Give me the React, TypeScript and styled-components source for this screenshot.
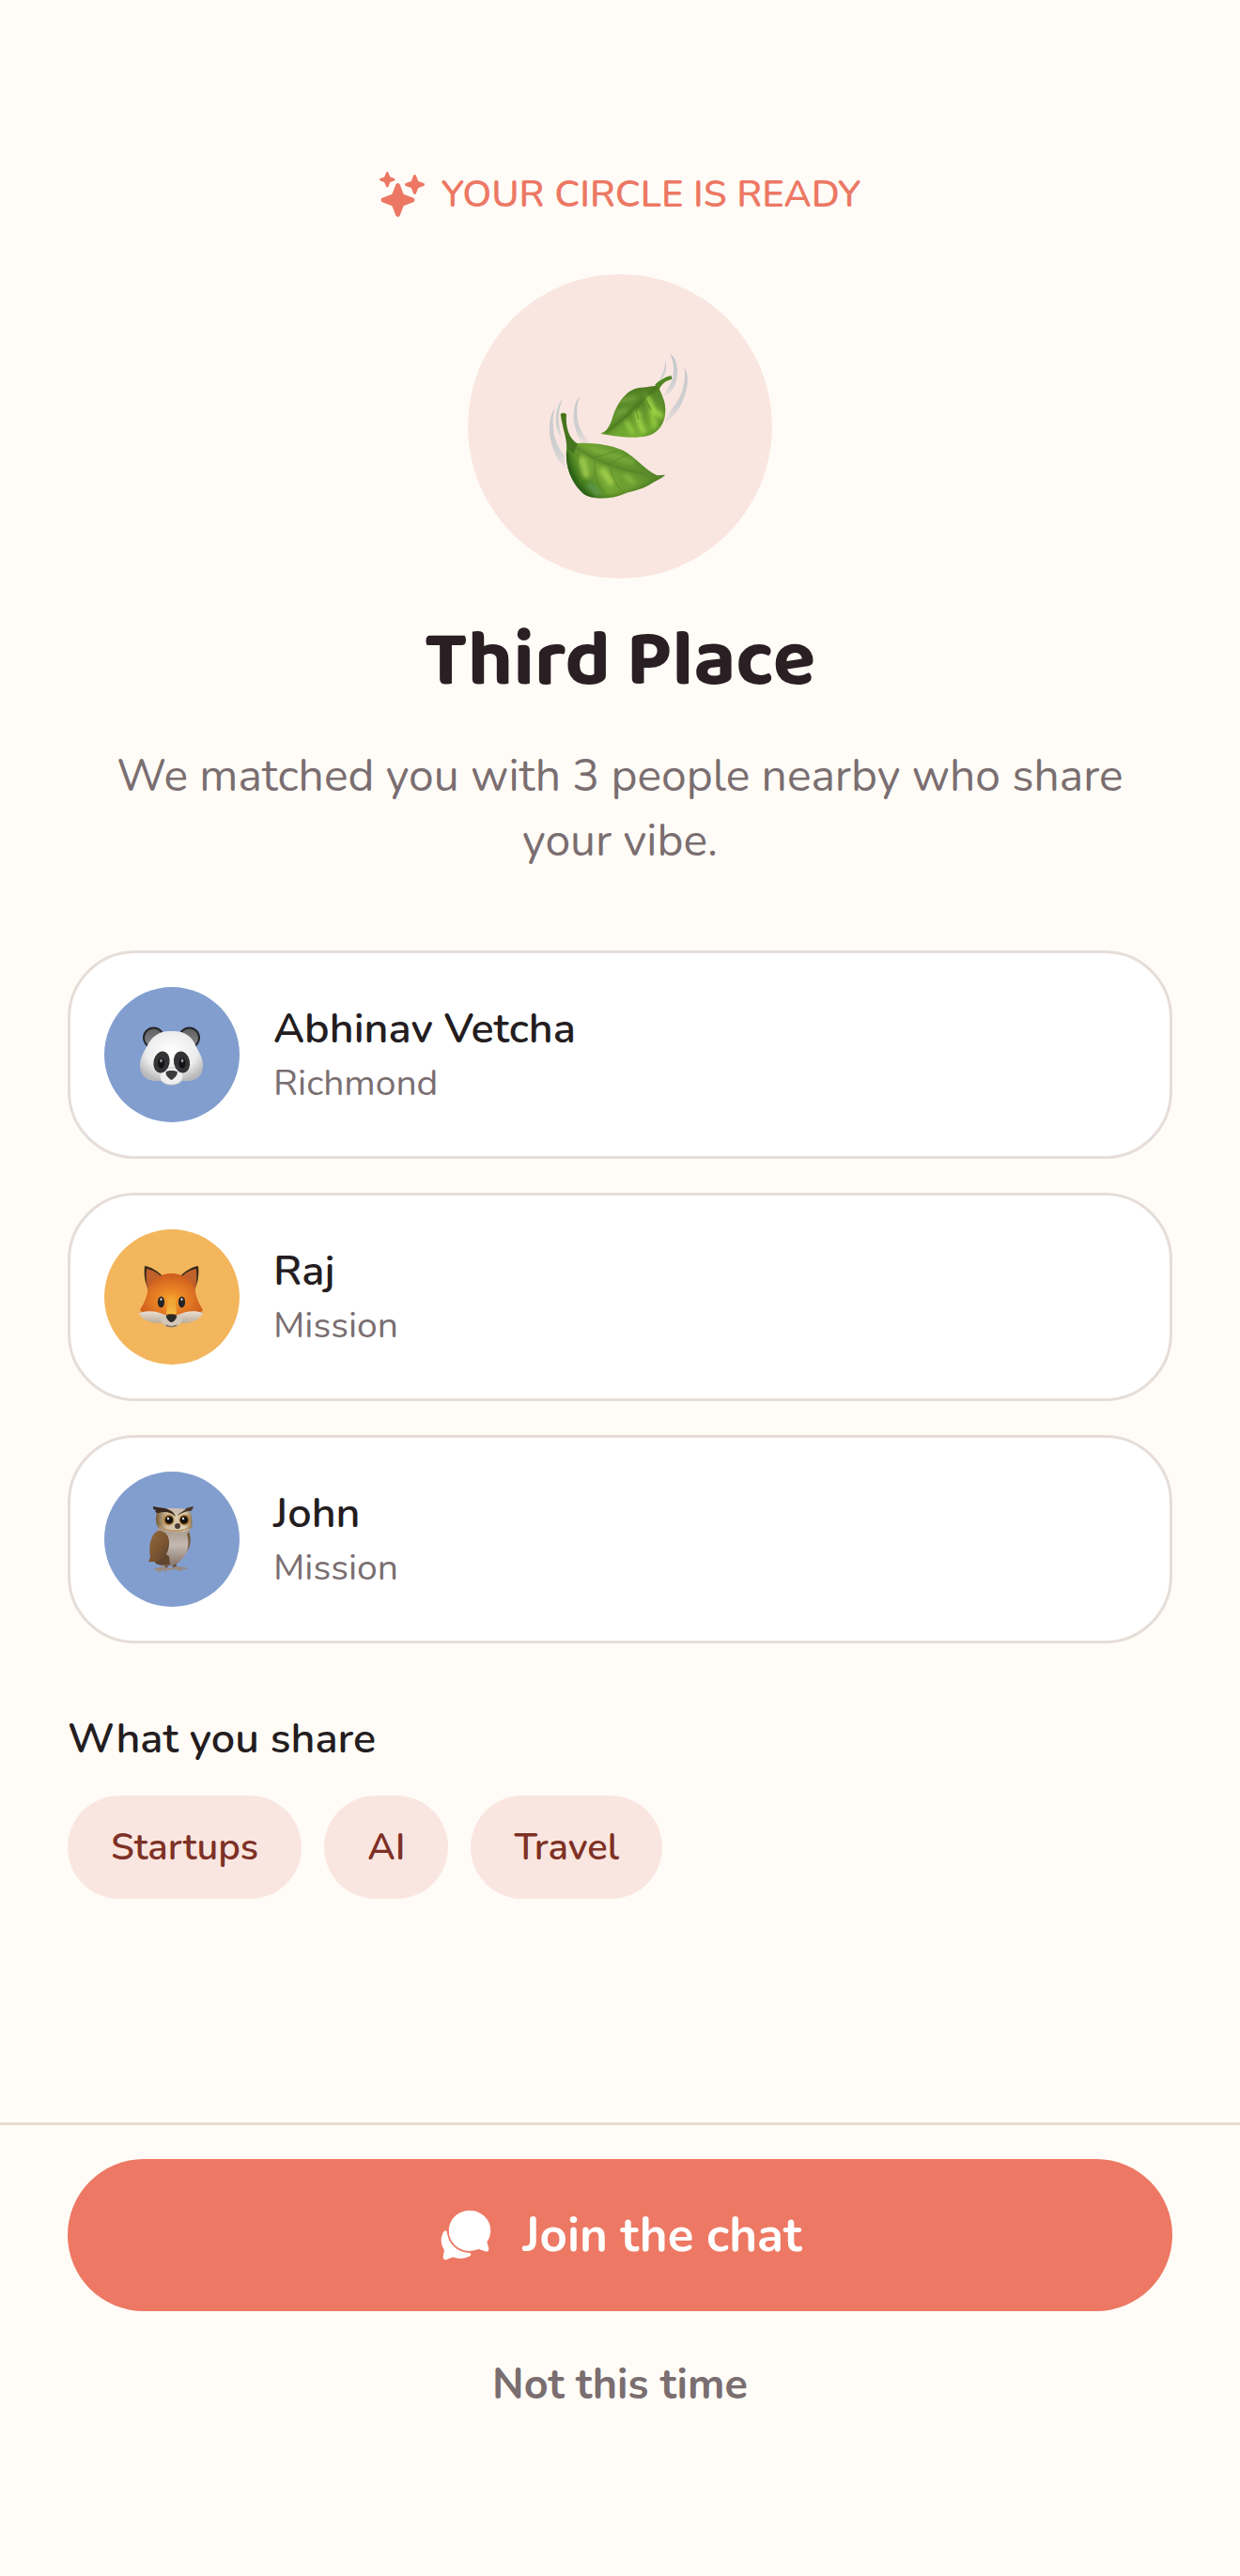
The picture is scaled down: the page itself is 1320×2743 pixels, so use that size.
import React from 'react';
import styled, { createGlobalStyle } from 'styled-components';
import { IoSparkles, IoChatbubbles } from 'react-icons/io5';

const GlobalStyle = createGlobalStyle`
  *, *::before, *::after { box-sizing: border-box; }
  body {
    margin: 0;
    background: #fffcf7;
    color: #241d1f;
    font-family: Nunito, Lato, "Open Sans", "Liberation Sans", sans-serif;
  }
  h1, h2, p, ul { margin: 0; padding: 0; }
  button { font-family: inherit; border: 0; cursor: pointer; }
`;

const Screen = styled.main`
  display: flex;
  flex-direction: column;
  min-height: 100vh;
`;

const Content = styled.div`
  display: flex;
  flex-direction: column;
  flex: 1;
  padding: 180px 72px 72px;
`;

const Hero = styled.header`
  display: flex;
  flex-direction: column;
  align-items: center;
  text-align: center;
`;

const Eyebrow = styled.p`
  display: flex;
  align-items: center;
  gap: 18px;
  color: #ec7864;
  font-size: 40px;
  line-height: 54px;
  font-weight: 600;
  text-transform: uppercase;
`;

const Emblem = styled.div`
  display: flex;
  align-items: center;
  justify-content: center;
  width: 324px;
  height: 324px;
  margin-top: 58px;
  border-radius: 50%;
  background: #fae6e0;
`;

const Title = styled.h1`
  margin-top: 38px;
  color: #2a1f22;
  font-family: "Baloo 2", Lato, "Open Sans", sans-serif;
  font-size: 84px;
  line-height: 102px;
  font-weight: 700;
`;

const Lead = styled.p`
  margin-top: 36px;
  color: #7a6e70;
  font-size: 48px;
  line-height: 69px;
`;

const People = styled.ul`
  display: flex;
  flex-direction: column;
  gap: 36px;
  margin-top: 82px;
  list-style: none;
`;

const PersonCard = styled.li`
  display: flex;
  align-items: center;
  gap: 36px;
  padding: 36px;
  border: 3px solid #e6ddd8;
  border-radius: 72px;
  background: #ffffff;
`;

const Avatar = styled.div<{ $tint: string }>`
  display: flex;
  align-items: center;
  justify-content: center;
  flex: none;
  width: 144px;
  height: 144px;
  border-radius: 50%;
  background: ${(p) => p.$tint};
`;

const PersonText = styled.div`
  display: flex;
  flex-direction: column;
  gap: 2px;
`;

const PersonName = styled.span`
  font-size: 45px;
  line-height: 60px;
  font-weight: 600;
`;

const PersonArea = styled.span`
  color: #7a6e70;
  font-size: 39px;
  line-height: 52px;
`;

const Shared = styled.section`
  display: flex;
  flex-direction: column;
  gap: 30px;
  margin-top: 72px;
`;

const SharedTitle = styled.h2`
  font-size: 45px;
  line-height: 60px;
  font-weight: 600;
`;

const Tags = styled.ul`
  display: flex;
  flex-wrap: wrap;
  gap: 24px;
  list-style: none;
`;

const Tag = styled.li`
  padding: 28px 46px;
  border-radius: 56px;
  background: #fae6e0;
  color: #7e3126;
  font-size: 40px;
  line-height: 54px;
  font-weight: 600;
`;

const Footer = styled.footer`
  display: flex;
  flex-direction: column;
  gap: 24px;
  padding: 36px 72px 150px;
  border-top: 3px solid #e6ddd3;
`;

const JoinButton = styled.button`
  display: flex;
  align-items: center;
  justify-content: center;
  gap: 30px;
  height: 162px;
  border-radius: 81px;
  background: #ed7864;
  color: #ffffff;
  font-size: 51px;
  font-weight: 700;
`;

const SkipButton = styled.button`
  height: 108px;
  background: transparent;
  color: #7a6e70;
  font-size: 45px;
  font-weight: 700;
`;

function Leaves() {
  return (
    <svg width="160" height="160" viewBox="300 312 480 480" role="img" aria-label="Leaves in the wind">
      <defs>
        <linearGradient id="wind" x1="0" y1="0" x2="0" y2="1">
          <stop offset="0" stopColor="#c6c8cb" />
          <stop offset="0.7" stopColor="#cfd0d2" />
          <stop offset="1" stopColor="#cfd0d2" stopOpacity="0.3" />
        </linearGradient>
        <linearGradient id="leafTop" x1="0.3" y1="0" x2="0.6" y2="1">
          <stop offset="0" stopColor="#4c7a22" />
          <stop offset="0.45" stopColor="#5d8e2a" />
          <stop offset="1" stopColor="#78b034" />
        </linearGradient>
        <linearGradient id="leafLow" x1="0.1" y1="0.7" x2="0.9" y2="0.4">
          <stop offset="0" stopColor="#35701a" />
          <stop offset="0.3" stopColor="#74a634" />
          <stop offset="0.7" stopColor="#66992f" />
          <stop offset="1" stopColor="#4e7e28" />
        </linearGradient>
        <filter id="soft" x="-20%" y="-20%" width="140%" height="140%"><feGaussianBlur stdDeviation="6" /></filter>
        <clipPath id="topClip"><path d="M480 573C496 571 508 550 516 524C532 474 564 430 606 428C630 426 646 424 662 420C666 440 684 462 685 498C686 540 664 574 626 583C584 592 540 586 480 576Z" /></clipPath>
        <clipPath id="lowClip"><path d="M370 618C376 604 390 600 404 606C440 602 510 610 548 628C590 650 620 692 656 708C668 710 676 706 684 708C672 718 662 722 648 730C612 756 584 756 552 768C510 786 450 786 424 768C384 732 362 680 370 618Z" /></clipPath>
      </defs>
      <g fill="url(#wind)">
        <path d="M699 320C720 328 728 372 722 396C716 432 700 450 676 456C694 430 706 414 710 388C714 360 708 338 699 320Z" />
        <path d="M745 363C762 384 758 432 740 470C728 500 706 530 684 538C692 510 714 490 730 460C746 428 750 390 745 363Z" />
        <path d="M686 342C692 372 680 402 662 410C674 390 684 368 686 342Z" />
        <path d="M334 490C316 512 310 560 318 594C326 632 344 668 364 684L362 646C346 626 332 598 328 566C324 536 326 510 334 490Z" />
        <path d="M357 463C338 484 330 530 338 558C342 574 348 584 354 590C350 566 344 550 344 526C344 500 350 482 357 463Z" />
        <path d="M412 456C394 472 386 516 396 552C402 578 412 596 420 606L442 604C424 580 408 560 404 526C400 500 404 476 412 456Z" />
      </g>
      <path d="M480 573C496 571 508 550 516 524C532 474 564 430 606 428C630 426 646 424 662 420C666 440 684 462 685 498C686 540 664 574 626 583C584 592 540 586 480 576Z" fill="url(#leafTop)" />
      <g clipPath="url(#topClip)">
        <g filter="url(#soft)" fill="none" strokeLinecap="round">
          <path d="M662 420C620 458 580 510 492 572" stroke="#436e1e" strokeWidth="9" />
          <path d="M630 462C646 500 656 510 672 518" stroke="#a5da48" strokeWidth="14" />
          <path d="M596 508C598 540 606 552 614 566" stroke="#a5da48" strokeWidth="14" />
          <path d="M640 500L650 550" stroke="#98cf40" strokeWidth="14" />
          <path d="M562 540L580 572" stroke="#9ad342" strokeWidth="12" />
          <path d="M540 470L588 460M530 510L560 500" stroke="#7eac42" strokeWidth="9" />
          <path d="M686 470C690 530 664 576 620 586" stroke="#3e7420" strokeWidth="7" />
        </g>
        <path d="M662 424C620 458 580 510 492 572M620 464L640 500M590 494L600 530" fill="none" stroke="#46731f" strokeWidth="2" />
      </g>
      <path d="M652 418C668 404 684 394 704 390L706 402C690 404 676 414 668 428L664 434Z" fill="#4f8522" />
      <path d="M370 618C376 604 390 600 404 606C440 602 510 610 548 628C590 650 620 692 656 708C668 710 676 706 684 708C672 718 662 722 648 730C612 756 584 756 552 768C510 786 450 786 424 768C384 732 362 680 370 618Z" fill="url(#leafLow)" />
      <g clipPath="url(#lowClip)">
        <g filter="url(#soft)" fill="none" strokeLinecap="round">
          <path d="M384 606C440 650 520 690 670 710" stroke="#5b8a2b" strokeWidth="16" />
          <path d="M420 660L432 706" stroke="#9ac64a" strokeWidth="24" />
          <path d="M486 694L510 730" stroke="#9ecb4a" strokeWidth="22" />
          <path d="M560 712L580 730" stroke="#86b840" strokeWidth="16" />
          <path d="M450 624L520 644M530 650L580 666" stroke="#7dae3c" strokeWidth="12" />
          <path d="M368 640C370 700 404 768 460 786" stroke="#2c5d14" strokeWidth="18" />
          <path d="M460 784C540 782 600 756 660 726" stroke="#41711f" strokeWidth="9" />
          <path d="M444 740L470 764" stroke="#5c9650" strokeWidth="16" />
        </g>
        <g fill="none" stroke="#547f26" strokeWidth="2">
          <path d="M390 612C450 660 530 694 668 710M408 636C402 680 400 704 416 740M458 662C460 710 464 730 490 768M508 682C514 720 530 740 552 764" />
          <path d="M450 654L530 630M500 676L562 642" />
        </g>
      </g>
      <path d="M350 514C354 508 364 508 369 514C366 550 374 588 404 608L392 640L370 622C370 590 356 556 350 514Z" fill="#46751f" />
    </svg>
  );
}

function Panda() {
  return (
    <svg width="72" height="72" viewBox="-36 -36 72 72" role="img" aria-label="Panda">
      <defs>
        <radialGradient id="pandaFace" cx="0.5" cy="0.4" r="0.62">
          <stop offset="0" stopColor="#ffffff" />
          <stop offset="0.65" stopColor="#ececec" />
          <stop offset="1" stopColor="#b9b9bb" />
        </radialGradient>
        <linearGradient id="pandaEar" x1="0" y1="0" x2="0" y2="1">
          <stop offset="0" stopColor="#5d5d60" />
          <stop offset="1" stopColor="#8d8d90" />
        </linearGradient>
      </defs>
      <circle cx="-19.5" cy="-18" r="10.5" fill="url(#pandaEar)" stroke="#252528" strokeWidth="2" />
      <circle cx="18.5" cy="-18" r="10.5" fill="url(#pandaEar)" stroke="#252528" strokeWidth="2" />
      <path d="M-0.5 -25C12 -26 22 -20 26 -8C30 -1 33 4 33 12C33 24 24 29 11 28H-11C-25 29 -34 24 -34 12C-34 4 -31 -1 -27 -8C-22 -20 -12 -26 -0.5 -25Z" fill="url(#pandaFace)" />
      <path d="M-12 26C-15 19 -10 14 -4 14H3C10 14 14 19 11 26C8 34 -9 34 -12 26Z" fill="#eeeeee" stroke="#cccccc" strokeWidth="1" />
      <ellipse cx="-11" cy="8" rx="8.5" ry="11.5" fill="#343436" transform="rotate(12 -11 8)" />
      <ellipse cx="10.5" cy="8" rx="8.5" ry="11.5" fill="#343436" transform="rotate(-12 10.5 8)" />
      <ellipse cx="-11.5" cy="9" rx="3.5" ry="5.5" fill="#111113" />
      <ellipse cx="11" cy="9" rx="3.5" ry="5.5" fill="#111113" />
      <ellipse cx="-11.5" cy="6.5" rx="1.3" ry="2" fill="#929294" />
      <ellipse cx="11" cy="6.5" rx="1.3" ry="2" fill="#929294" />
      <path d="M-6 18C-4 16.500 3 16.500 5.500 18C7 21 2 26 -0.500 27C-3 26 -8 21 -6 18Z" fill="#3b3b3d" />
    </svg>
  );
}

function Fox() {
  return (
    <svg width="72" height="72" viewBox="-36 -36 72 72" role="img" aria-label="Fox">
      <defs>
        <radialGradient id="foxFace" cx="0.5" cy="0.55" r="0.55">
          <stop offset="0" stopColor="#f5a12c" />
          <stop offset="0.45" stopColor="#e77f25" />
          <stop offset="1" stopColor="#cc5a1c" />
        </radialGradient>
        <linearGradient id="foxMuzzle" x1="0" y1="0" x2="0" y2="1">
          <stop offset="0" stopColor="#e9dfd1" />
          <stop offset="1" stopColor="#aa9a86" />
        </linearGradient>
        <linearGradient id="foxNose" x1="0" y1="0" x2="0" y2="1">
          <stop offset="0" stopColor="#f4b53a" stopOpacity="0" />
          <stop offset="1" stopColor="#f6bd45" />
        </linearGradient>
      </defs>
      <path d="M-29 -33C-23 -32 -15 -28 -10 -22L-25 -8C-29 -16 -30 -24 -29 -33Z" fill="#35281a" />
      <path d="M28 -33C22 -32 14 -28 9 -22L24 -8C28 -16 29 -24 28 -33Z" fill="#35281a" />
      <path d="M-27 -30C-21 -29 -15 -26 -10 -20L-25 -4C-27 -12 -28 -20 -27 -30Z" fill="#c0612a" />
      <path d="M26 -30C20 -29 14 -26 9 -20L24 -4C26 -12 27 -20 26 -30Z" fill="#c0612a" />
      <path d="M-0.500 -25C12 -25 20 -18 24 -9C26 0 28 6 33 14L31 16L33 17L10 25H-12L-35 17L-32 16L-34 14C-29 6 -27 0 -25 -9C-21 -18 -13 -25 -0.500 -25Z" fill="url(#foxFace)" />
      <path d="M-4 -4H3L5 18H-6Z" fill="url(#foxNose)" />
      <path d="M-35 17C-26 14 -16 15 -10 18C-6 20 5 20 9 18C15 15 25 14 33 17C32 21 29 22 27 24C20 28 13 28 9 28C5 34 -7 34 -10 28C-18 28 -24 27 -29 24C-31 22 -34 21 -35 17Z" fill="url(#foxMuzzle)" />
      <path d="M-12 24C-10 18 -6 20 -0.500 26C5 20 9 18 11 24C11 34 -11 34 -12 24Z" fill="#d2c7b8" />
      <path d="M-6 19.500C-3 18 2 18 5 19.500C6 22 2 27 -0.500 27C-3 27 -7 22 -6 19.500Z" fill="#2c2c26" />
      <path d="M-6 30C-3 32 2 32 5 30" fill="none" stroke="#796a59" strokeWidth="1.200" />
      <ellipse cx="-11.500" cy="5.500" rx="3.600" ry="6" fill="#232426" />
      <ellipse cx="10.500" cy="5.500" rx="3.600" ry="6" fill="#232426" />
      <ellipse cx="-11.500" cy="2.500" rx="1" ry="1.600" fill="#e6dcd2" />
      <ellipse cx="10.500" cy="2.500" rx="1" ry="1.600" fill="#e6dcd2" />
    </svg>
  );
}

function Owl() {
  return (
    <svg width="72" height="72" viewBox="-36 -36 72 72" role="img" aria-label="Owl">
      <defs>
        <linearGradient id="owlWing" x1="0" y1="0" x2="1" y2="1">
          <stop offset="0" stopColor="#96693a" />
          <stop offset="0.6" stopColor="#785330" />
          <stop offset="1" stopColor="#574031" />
        </linearGradient>
        <linearGradient id="owlBelly" x1="0" y1="0" x2="0" y2="1">
          <stop offset="0" stopColor="#a59689" />
          <stop offset="0.45" stopColor="#c4bab2" />
          <stop offset="1" stopColor="#85736a" />
        </linearGradient>
        <linearGradient id="owlHead" x1="0" y1="0" x2="1" y2="0">
          <stop offset="0" stopColor="#755735" />
          <stop offset="0.3" stopColor="#d0bf9f" />
          <stop offset="0.8" stopColor="#ddd0b8" />
          <stop offset="1" stopColor="#907554" />
        </linearGradient>
      </defs>
      <path d="M-7 22L-6 30M2 22L3 30" stroke="#5f4b3d" strokeWidth="4" />
      <path d="M-18 32L-8 30L-7 34M-15 34L-7 31L-3 32M-2 32L4 30L15 31M3 31L10 33" fill="none" stroke="#998a7c" strokeWidth="2.200" strokeLinecap="round" />
      <path d="M-15 -12H18C20 -3 20 5 17 11C14 18 8 27 0 28C-7 29 -13 29 -17 25Z" fill="url(#owlBelly)" />
      <path d="M-17 10L-3 18L-2 27C-9 28 -15 28 -18 25Z" fill="#62452d" />
      <path d="M18 -8C21 -2 20 8 16 13C18 6 18 0 16 -5Z" fill="#76583c" />
      <path d="M-15 -9C-7 -10 -2 -3 -3 6C-4 17 -10 22 -17 24L-25 24L-23 19C-25 8 -23 -5 -15 -9Z" fill="url(#owlWing)" />
      <path d="M-16 -29C-8 -34 14 -34 20 -28C22 -22 22 -17 21 -12C12 -5 -6 -7 -15 -13C-18 -18 -17 -25 -16 -29Z" fill="url(#owlHead)" />
      <path d="M-14 -14C-5 -7 13 -7 20 -14" fill="none" stroke="#b4905d" strokeWidth="1.500" />
      <path d="M-20 -35C-12 -33 1 -34 4 -24C-1 -29 -8 -30 -14 -28C-18 -28 -19 -30 -16 -31C-20 -31 -20 -33 -20 -35Z" fill="#38281e" />
      <path d="M23 -35C14 -33 9 -31 6 -25C10 -28 15 -30 20 -30C22 -31 22 -33 23 -35Z" fill="#4a3627" />
      <path d="M-5 -33C2 -33 11 -33 15 -32L6 -26Z" fill="#cbbdaf" />
      <circle cx="-3.500" cy="-20.500" r="6" fill="#b78340" />
      <circle cx="13.500" cy="-20.500" r="6" fill="#b78340" />
      <circle cx="-3" cy="-20.500" r="4.300" fill="#15120f" />
      <circle cx="13" cy="-20.500" r="4.300" fill="#15120f" />
      <circle cx="-4" cy="-22" r="1.200" fill="#ffffff" />
      <circle cx="12" cy="-22" r="1.200" fill="#ffffff" />
      <ellipse cx="6" cy="-14" rx="3" ry="3" fill="#4a3b31" />
    </svg>
  );
}

const people = [
  { name: 'Abhinav Vetcha', area: 'Richmond', tint: '#829ecf', Face: Panda },
  { name: 'Raj', area: 'Mission', tint: '#f3b65c', Face: Fox },
  { name: 'John', area: 'Mission', tint: '#829ecf', Face: Owl },
];

const interests = ['Startups', 'AI', 'Travel'];

export default function App() {
  return (
    <>
      <GlobalStyle />
      <Screen>
        <Content>
          <Hero>
            <Eyebrow>
              <IoSparkles size={48} aria-hidden />
              Your circle is ready
            </Eyebrow>
            <Emblem>
              <Leaves />
            </Emblem>
            <Title>Third Place</Title>
            <Lead>We matched you with 3 people nearby who share your vibe.</Lead>
          </Hero>
          <People>
            {people.map(({ name, area, tint, Face }) => (
              <PersonCard key={name}>
                <Avatar $tint={tint}>
                  <Face />
                </Avatar>
                <PersonText>
                  <PersonName>{name}</PersonName>
                  <PersonArea>{area}</PersonArea>
                </PersonText>
              </PersonCard>
            ))}
          </People>
          <Shared>
            <SharedTitle>What you share</SharedTitle>
            <Tags>
              {interests.map((interest) => (
                <Tag key={interest}>{interest}</Tag>
              ))}
            </Tags>
          </Shared>
        </Content>
        <Footer>
          <JoinButton type="button">
            <IoChatbubbles size={60} aria-hidden />
            Join the chat
          </JoinButton>
          <SkipButton type="button">Not this time</SkipButton>
        </Footer>
      </Screen>
    </>
  );
}
